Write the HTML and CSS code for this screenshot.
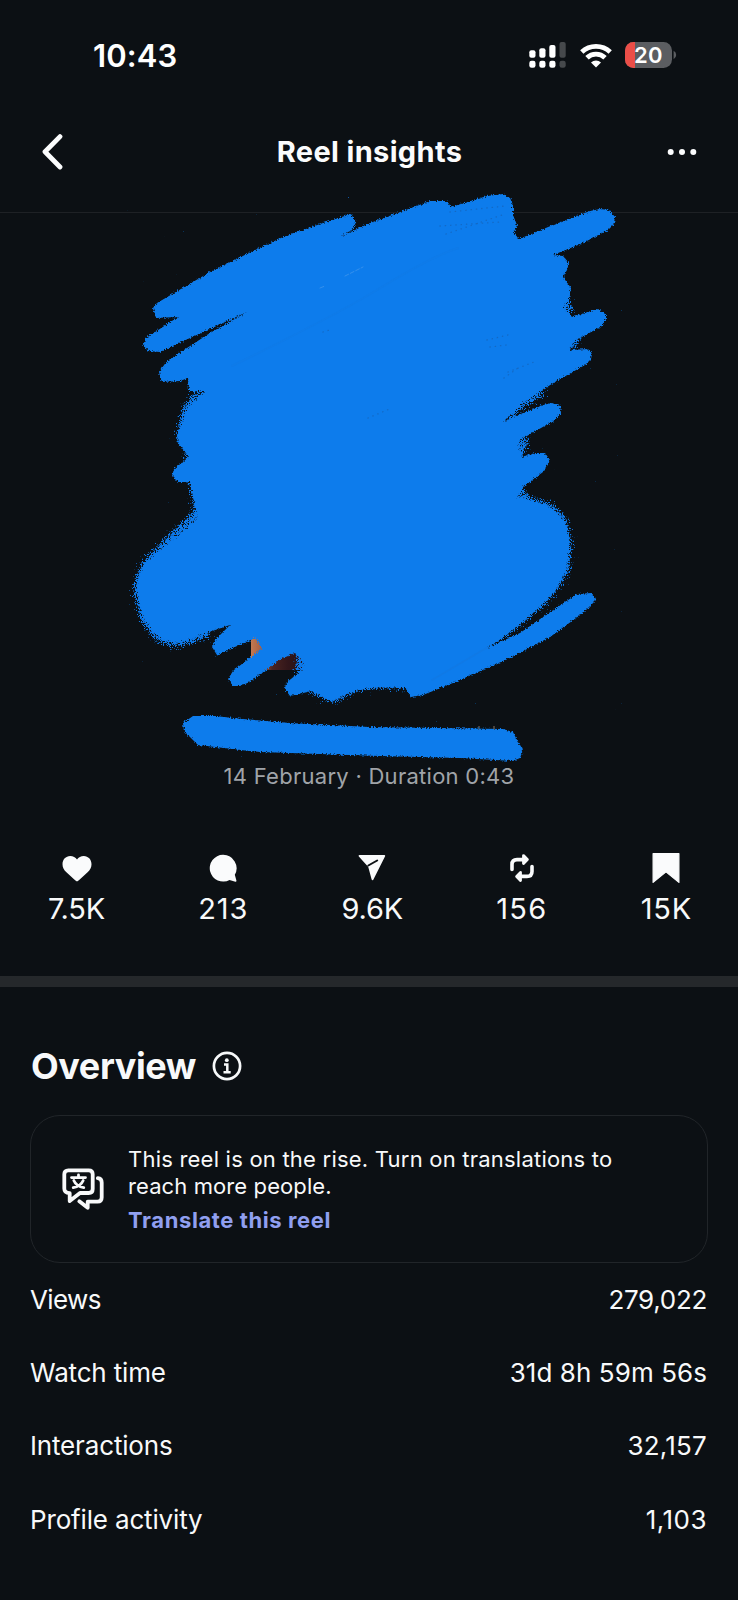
FILE: index.html
```html
<!DOCTYPE html>
<html lang="en">
<head>
<meta charset="utf-8">
<title>Reel insights</title>
<link rel="stylesheet" href="styles.css">
</head>
<body>
<div class="status-bar">
  <span class="clock">10:43</span>
  <div class="status-icons">
    <svg class="signal" width="38" height="26" viewBox="0 0 38 26" fill="#fff">
      <rect x="0.3" y="8.3" width="6.2" height="7.5" rx="2"/>
      <rect x="10.3" y="6.3" width="6.2" height="9.5" rx="2"/>
      <rect x="20.3" y="3" width="6.2" height="12.8" rx="2"/>
      <rect x="30.5" y="0" width="6.2" height="15.8" rx="2" opacity=".24"/>
      <rect x="0.3" y="18.8" width="6.2" height="7" rx="2.3"/>
      <rect x="10.3" y="18.8" width="6.2" height="7" rx="2.3"/>
      <rect x="20.3" y="18.8" width="6.2" height="7" rx="2.3"/>
      <rect x="30.5" y="18.8" width="6.2" height="7" rx="2.3" opacity=".24"/>
    </svg>
    <svg class="wifi" width="32" height="25" viewBox="0 0 32 25">
      <g fill="none" stroke="#fff" stroke-width="4.8">
        <path d="M1.8 9A20.6 20.6 0 0 1 30.2 9"/>
        <path d="M7 14.800A12.800 12.800 0 0 1 25 14.800"/>
      </g>
      <path d="M16 24.600 11 19.600A7.200 7.200 0 0 1 21 19.600Z" fill="#fff"/>
    </svg>
    <div class="battery"><span class="battery-level"></span><span class="battery-text">20</span></div>
    <svg class="battery-tip" width="4" height="10" viewBox="0 0 4 10"><path d="M.6 .8Q3.2 2.4 3.2 5T.6 9.2Z" fill="#5b5d61"/></svg>
  </div>
</div>

<header class="header">
  <svg class="back" width="22" height="36" viewBox="0 0 22 36" fill="none" stroke="#fcfdfe" stroke-width="4.8" stroke-linecap="round" stroke-linejoin="round"><path d="M18 2.600 3 17.800 18 33"/></svg>
  <h1 class="title">Reel insights</h1>
  <svg class="more" width="30" height="8" viewBox="0 0 30 8" fill="#fcfdfe"><circle cx="3.7" cy="4" r="3"/><circle cx="15" cy="4" r="3"/><circle cx="26.3" cy="4" r="3"/></svg>
</header>

<section class="media">
  <svg class="scribble" width="498" height="582" viewBox="124 186 498 582">
    <defs>
      <filter id="rough" x="124" y="186" width="498" height="582" filterUnits="userSpaceOnUse">
        <feTurbulence type="fractalNoise" baseFrequency=".7" numOctaves="2" seed="4" result="n"/>
        <feDisplacementMap in="SourceGraphic" in2="n" scale="4.5" xChannelSelector="R" yChannelSelector="G"/>
      </filter>
      <filter id="spray" x="100" y="186" width="540" height="582" filterUnits="userSpaceOnUse">
        <feTurbulence type="fractalNoise" baseFrequency=".85" numOctaves="2" seed="9" result="n"/>
        <feGaussianBlur in="SourceAlpha" stdDeviation="4.5" result="b"/>
        <feComposite in="b" in2="n" operator="arithmetic" k1="0" k2=".5" k3=".8" k4="0" result="m"/>
        <feComponentTransfer in="m" result="t"><feFuncA type="linear" slope="12" intercept="-8.2"/></feComponentTransfer>
        <feFlood flood-color="#0e7aeb"/>
        <feComposite in2="t" operator="in"/>
      </filter>
      <linearGradient id="photo" x1="251" x2="304" y1="0" y2="0" gradientUnits="userSpaceOnUse">
        <stop offset="0" stop-color="#c4794f"/><stop offset=".22" stop-color="#a45c42"/><stop offset=".4" stop-color="#4a2420"/><stop offset=".7" stop-color="#32161a"/><stop offset="1" stop-color="#241218"/>
      </linearGradient>
    </defs>
    <rect x="251" y="632" width="52" height="38" fill="url(#photo)"/>
    <path d="M479 731v-5M494 731v-5" stroke="#8a7460" stroke-width="1"/>
    <g filter="url(#spray)" fill="none" stroke="#000" stroke-width="12" stroke-linecap="round" stroke-linejoin="round">
      <path d="M199 394 186 412 182 436M190 456 194 482 200 512 175 536 147 564 138 586 145 618 160 638 177 642 208 632"/>
      <path d="M562 290 568 312M568 345 576 340M540 392 522 402 506 416M524 440 518 456M520 490 524 503 545 506 562 520 567 545 564 572 543 600 516 622 490 642"/>
      <path d="M303 652 300 672M312 688 333 697 352 688 378 682 404 684" />
    </g>
    <g filter="url(#rough)" fill="#0e7bec">
      <path d="M153 308 157 303 210 272 253 251 283 237 323 223 351 214 356 222 353 229 342 236 370 223 403 211 430 201 447 201 451 207 487 196 503 194 510 198 513 205 513 215 517 225 514 233 519 239 553 225 590 211 600 209 609 210 615 217 614 224 608 230 583 243 553 255 563 256 569 263 567 270 563 277 571 288 569 298 563 307 572 317 597 309 606 314 606 319 602 326 573 342 570 350 588 349 592 354 591 359 585 365 555 382 523 402 503 422 523 413 543 405 552 403 560 406 561 413 555 420 520 440 518 447 522 457 535 453 545 453 550 460 543 472 523 487 517 497 537 502Q556 508 563 520T569 545Q568 567 560 582T543 603Q520 627 487 648L520 633 543 617 577 594 591 593 596 600 583 613 550 637 510 658 453 683 423 695 411 697 405 687 370 688 350 692 332 702 312 691 290 696 285 689 286 683 302 670 304 662 295 653 281 659 250 682 240 686 233 686 228 679 233 671 262 648 255 638 217 655 212 647 216 639 230 625 177 643 160 638Q147 627 142 612T138 582Q140 568 147 561L173 540 198 518 194 500 190 482 178 482 172 476 174 469 189 457 178 443 177 436 182 423 190 406 205 391 189 391 188 378 180 381 162 382 159 372 167 361 210 333 247 312 210 329 179 343 160 352 148 351 143 345 146 338 178 317 156 318Z"/>
      <path d="M193 716 215 716 243 719 290 723 370 727 503 729 513 732 516 738 523 750 520 758 513 761 460 758 380 756 260 752 198 745 184 731 183 723Z"/>
    </g>
    <g fill="none" stroke-linecap="round">
      <path d="M232 366Q330 318 372 293 430 257 458 248" stroke="#1477df" stroke-width="2" opacity=".25"/>
      <path d="M488 647 432 680" stroke="#1674d8" stroke-width="1.5" opacity=".3"/>
      <path d="M345 276 363 267M320 288 325 286" stroke="#4f9cec" stroke-width="1" opacity=".6" stroke-dasharray="4 2"/>
      <path d="M490 347 506 345M487 340 512 334M504 378 518 368M508 372 534 362M323 332 333 329M368 418 392 408M440 226 500 222M450 212 505 206M446 234 505 214" stroke="#1761b4" stroke-width="1.300" stroke-dasharray=".3 5" opacity=".7"/>
    </g>
  </svg>
  <p class="meta">14 February · Duration 0:43</p>
</section>

<section class="stats">
  <div class="stat">
    <svg width="30" height="30" viewBox="0 0 30 30" fill="#fafbfc"><path d="M15 28.200C14.200 28.200 13.600 27.600 12.300 26.400L4.400 19.300C1.800 16.800.5 14.100.5 11.200.5 6.600 3.800 3 8.200 3c2.900 0 5.300 1.300 6.800 3.400C16.500 4.300 18.900 3 21.800 3c4.400 0 7.700 3.600 7.700 8.200 0 2.900-1.300 5.600-3.900 8.100l-7.900 7.100C16.400 27.600 15.800 28.200 15 28.200Z"/></svg>
    <span class="num num-likes">7.5K</span>
  </div>
  <div class="stat">
    <svg width="30" height="30" viewBox="0 0 30 30" fill="#fafbfc"><path d="M15 1.800A13.400 13.400 0 1 0 21.500 27L27.400 28.700Q28.600 28.900 28.400 27.600L26.800 21.800A13.400 13.400 0 0 0 15 1.800Z"/></svg>
    <span class="num num-wide">213</span>
  </div>
  <div class="stat">
    <svg width="30" height="30" viewBox="0 0 30 30"><path d="M2.500 2.800H27.300L15.500 26.300 12 13.300Z" fill="#fafbfc" stroke="#fafbfc" stroke-width="1.800" stroke-linejoin="round"/><path d="M11.300 12.500 20.200 7.500" stroke="#0c1014" stroke-width="2" stroke-linecap="round"/></svg>
    <span class="num num-likes">9.6K</span>
  </div>
  <div class="stat">
    <svg width="30" height="30" viewBox="0 0 30 30" fill="none" stroke="#fafbfc" stroke-width="3.600" stroke-linecap="round" stroke-linejoin="round"><path d="M5 16.500V11.500Q5 6.600 10 6.600H17"/><path d="M25 13.500V18.500Q25 23.400 20 23.400H13"/><path d="M16.500 2.600 20.400 6.600 16.500 10.600ZM13.500 19.400 9.600 23.400 13.500 27.400Z" fill="#fafbfc" stroke-width="2.800"/></svg>
    <span class="num num-reposts">156</span>
  </div>
  <div class="stat">
    <svg width="30" height="30" viewBox="0 0 30 30" fill="#fafbfc" stroke="#fafbfc" stroke-width="1.200" stroke-linejoin="round"><path d="M2.100.6H27.900V29.400L15 18.900 2.100 29.400Z"/></svg>
    <span class="num num-wide">15K</span>
  </div>
</section>

<section class="overview">
  <div class="heading">
    <h2>Overview</h2>
    <svg width="30" height="30" viewBox="0 0 30 30" fill="none" stroke="#f7f9fa" stroke-width="2.700"><circle cx="15" cy="15" r="13.100"/><circle cx="14.800" cy="9.200" r="1.900" fill="#f7f9fa" stroke="none"/><path d="M12 13.500H15.300V21M11.500 21.300H18.700" stroke-width="2.500"/></svg>
  </div>
  <div class="banner">
    <svg class="translate-icon" width="42" height="42" viewBox="0 0 42 42" fill="none" stroke="#f8f9fa" stroke-width="3.800" stroke-linecap="round" stroke-linejoin="round">
      <path d="M6.300 2.300H26.700Q30.700 2.300 30.700 6.300V21Q30.700 25 26.700 25H18L7.700 33V25.200Q2.300 25 2.300 20.500V6.300Q2.300 2.300 6.300 2.300Z"/>
      <path d="M35.800 10.200Q39.700 10.600 39.700 14.500V29.500Q39.700 33.700 35.500 33.700H25.700V39.800L17.300 33.300"/>
      <path d="M9.500 9.600H23.500M16.500 7V9.600M11.800 12.500C13.300 16 17 18.900 21.800 19.600M21.200 12.500C19.700 16 16 18.900 11.200 19.600" stroke-width="2.800"/>
    </svg>
    <div class="banner-text">
      <p class="message"><span class="line-one">This reel is on the rise. Turn on translations to</span><br>reach more people.</p>
      <a class="link">Translate this reel</a>
    </div>
  </div>
  <dl class="rows">
    <div class="row"><dt class="views">Views</dt><dd class="v-views">279,022</dd></div>
    <div class="row"><dt>Watch time</dt><dd>31d 8h 59m 56s</dd></div>
    <div class="row"><dt>Interactions</dt><dd class="v-inter">32,157</dd></div>
    <div class="row"><dt>Profile activity</dt><dd class="v-profile">1,103</dd></div>
  </dl>
</section>
</body>
</html>
```
FILE: styles.css
```css
* { box-sizing: border-box; }
body {
  margin: 0;
  width: 738px;
  height: 1600px;
  overflow: hidden;
  background: #0c1014;
  color: #f8f9fa;
  font-family: "Inter", "Liberation Sans", sans-serif;
}
h1, h2, p, dl, dd { margin: 0; }
svg { display: block; flex: none; }

.status-bar {
  height: 110px;
  padding: 0 61px 0 93px;
  display: flex;
  align-items: center;
  justify-content: space-between;
}
.clock { font-size: 31px; font-weight: 600; letter-spacing: .1px; color: #fff; }
.status-icons { display: flex; align-items: center; }
.wifi { margin-left: 13px; }
.battery {
  position: relative;
  margin-left: 13px;
  width: 47px;
  height: 26px;
  border-radius: 8.500px;
  overflow: hidden;
  background: #5b5d61;
  display: flex;
  align-items: center;
  justify-content: center;
}
.battery-level { position: absolute; left: 0; top: 0; width: 10px; height: 26px; background: #eb4e48; }
.battery-text { position: relative; font-size: 22px; font-weight: 600; letter-spacing: .3px; line-height: 26px; color: #fff; }
.battery-tip { margin-left: 1px; }

.header {
  height: 103px;
  padding: 0 41px 18px 42px;
  display: grid;
  grid-template-columns: 1fr auto 1fr;
  align-items: center;
  border-bottom: 1px solid #1e2125;
}
.more { justify-self: end; }
.title { font-size: 29px; font-weight: 700; line-height: 36px; letter-spacing: .35px; color: #fbfcfd; }

.media {
  position: relative;
  height: 577px;
  display: flex;
  flex-direction: column;
  justify-content: flex-end;
}
.scribble { position: absolute; left: 124px; top: -27px; }
.meta { text-align: center; font-size: 22px; line-height: 28px; letter-spacing: .27px; color: #a0a4a9; }

.stats {
  height: 186px;
  padding: 63px 46px 0 48px;
  display: flex;
  justify-content: space-between;
}
.stat { display: flex; flex-direction: column; align-items: center; gap: 8px; }
.num { font-size: 29px; line-height: 36px; }
.num-likes { letter-spacing: -.2px; }
.num-wide { letter-spacing: .8px; }
.num-reposts { letter-spacing: 1.200px; }

.overview {
  border-top: 11px solid #25282b;
  padding: 57px 30px 0;
}
.heading { display: flex; align-items: center; gap: 16px; padding-left: 1px; height: 44px; }
.heading h2 { font-size: 36px; line-height: 44px; font-weight: 700; letter-spacing: -.4px; }
.banner {
  margin-top: 27px;
  height: 148px;
  padding: 0 30px 0 31px;
  border: 1px solid #212529;
  border-radius: 30px;
  display: flex;
  align-items: center;
  gap: 24px;
}
.banner-text { display: flex; flex-direction: column; gap: 7px; padding-top: 1px; font-size: 22px; line-height: 27px; }
.message { letter-spacing: .1px; }
.line-one { letter-spacing: .22px; }
.link { font-weight: 700; letter-spacing: .6px; color: #909ff0; }

.rows { display: grid; grid-template-rows: repeat(4, 73.200px); }
.row {
  display: flex;
  align-items: center;
  justify-content: space-between;
  padding: 0 1px 0 0;
  font-size: 26px;
  letter-spacing: -.16px;
}
.views { letter-spacing: -.6px; }
dd { letter-spacing: .07px; }
.v-views { letter-spacing: -.3px; }
.v-inter { letter-spacing: .2px; }
.v-profile { letter-spacing: .5px; }
```
